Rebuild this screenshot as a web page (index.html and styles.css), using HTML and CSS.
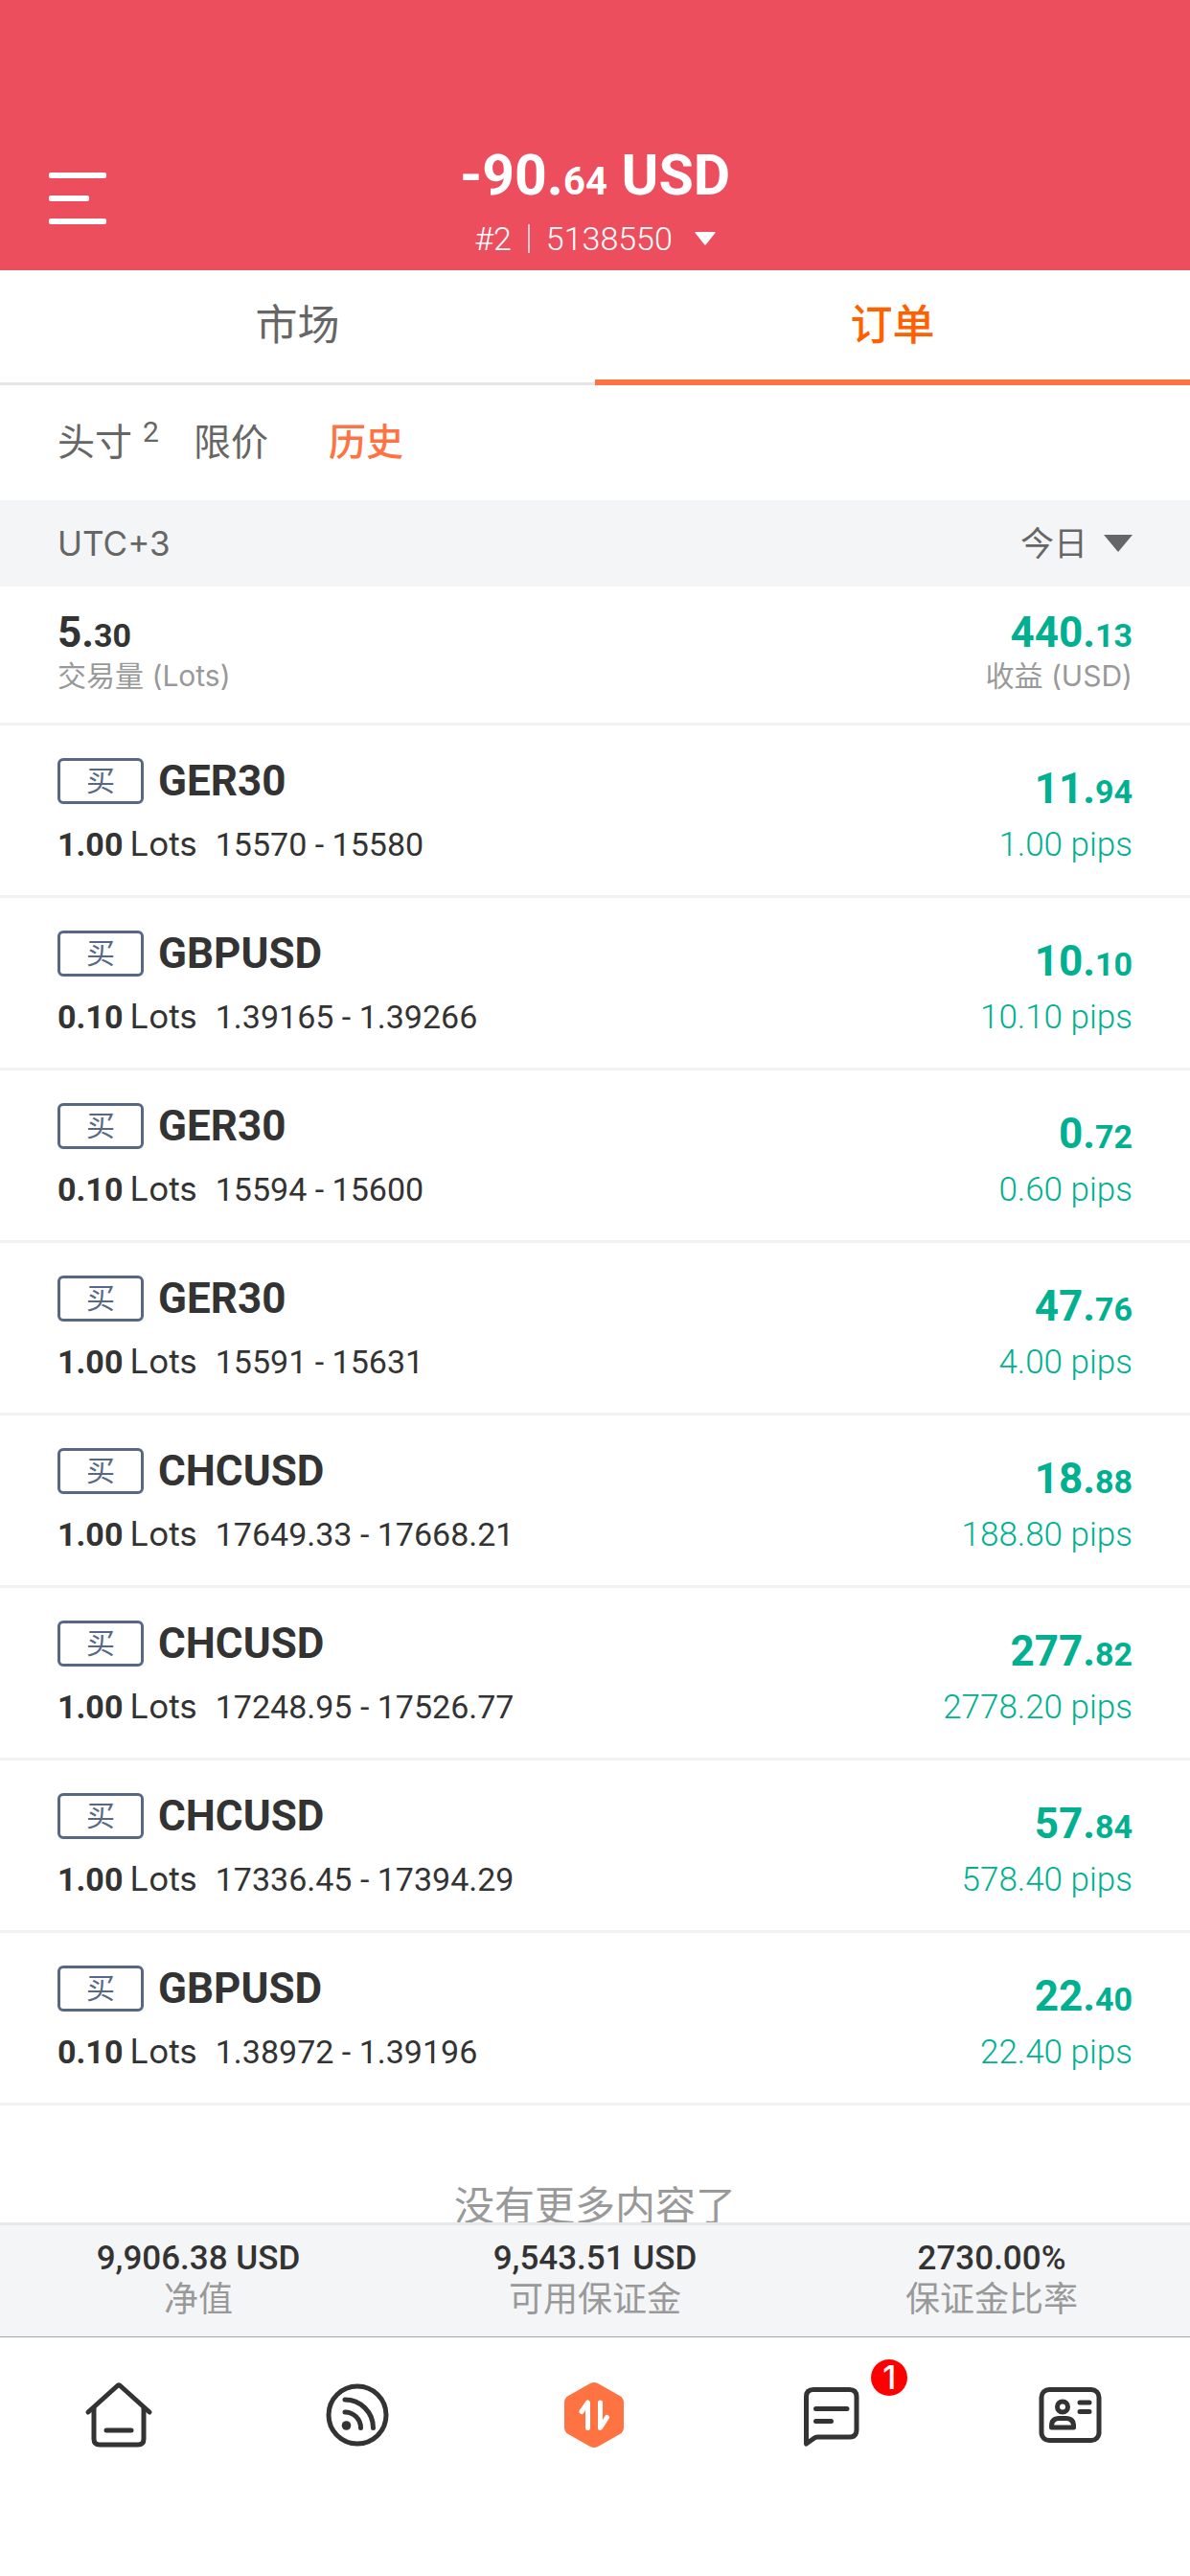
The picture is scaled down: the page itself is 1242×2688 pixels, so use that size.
FILE: index.html
```
<!DOCTYPE html>
<html lang="zh-CN">
<head>
    <meta charset="UTF-8">
    <meta name="viewport" content="width=device-width, initial-scale=1.0">
    <title>订单</title>
    <link rel="stylesheet" href="styles.css">
</head>
<body>
    <header class="header">
        <button type="button" class="menu-btn" aria-label="菜单">
            <span class="bar"></span>
            <span class="bar short"></span>
            <span class="bar"></span>
        </button>
        <div class="account">
            <h1 class="balance">-90.<small>64</small> USD</h1>
            <button type="button" class="account-btn">
                <span>#2</span>
                <span class="divider"></span>
                <span>5138550</span>
                <svg class="account-arrow" viewBox="0 0 22 14"><path d="M1 0h20q1 0 .5 1L12 13q-1 1-2 0L.5 1Q0 0 1 0z" fill="#fff"/></svg>
            </button>
        </div>
    </header>

    <nav class="tabs">
        <a href="#market" class="tab">市场</a>
        <a href="#orders" class="tab active">订单</a>
    </nav>

    <nav class="filters">
        <a href="#positions">头寸<sup>2</sup></a>
        <a href="#limit">限价</a>
        <a href="#history" class="active">历史</a>
    </nav>

    <div class="date-bar">
        <label for="period">UTC+3</label>
        <div class="period">
            <select id="period">
                <option>今日</option>
            </select>
            <svg class="period-arrow" viewBox="0 0 30 18"><path d="M0 0h30L15 18z" fill="#666"/></svg>
        </div>
    </div>

    <main class="content">
        <!-- Totals for the period -->
        <section class="summary">
            <div>
                <div class="amount">5.<small>30</small></div>
                <div class="caption">交易量 (Lots)</div>
            </div>
            <div class="right">
                <div class="amount green">440.<small>13</small></div>
                <div class="caption">收益 (USD)</div>
            </div>
        </section>

        <!-- Closed orders -->
        <ul class="orders">
            <li class="order">
                <div>
                    <div class="symbol"><span class="side">买</span>GER30</div>
                    <div class="detail"><b>1.00</b><span class="unit">Lots</span>15570 - 15580</div>
                </div>
                <div class="right">
                    <div class="amount green">11.<small>94</small></div>
                    <div class="pips">1.00 pips</div>
                </div>
            </li>
            <li class="order">
                <div>
                    <div class="symbol"><span class="side">买</span>GBPUSD</div>
                    <div class="detail"><b>0.10</b><span class="unit">Lots</span>1.39165 - 1.39266</div>
                </div>
                <div class="right">
                    <div class="amount green">10.<small>10</small></div>
                    <div class="pips">10.10 pips</div>
                </div>
            </li>
            <li class="order">
                <div>
                    <div class="symbol"><span class="side">买</span>GER30</div>
                    <div class="detail"><b>0.10</b><span class="unit">Lots</span>15594 - 15600</div>
                </div>
                <div class="right">
                    <div class="amount green">0.<small>72</small></div>
                    <div class="pips">0.60 pips</div>
                </div>
            </li>
            <li class="order">
                <div>
                    <div class="symbol"><span class="side">买</span>GER30</div>
                    <div class="detail"><b>1.00</b><span class="unit">Lots</span>15591 - 15631</div>
                </div>
                <div class="right">
                    <div class="amount green">47.<small>76</small></div>
                    <div class="pips">4.00 pips</div>
                </div>
            </li>
            <li class="order">
                <div>
                    <div class="symbol"><span class="side">买</span>CHCUSD</div>
                    <div class="detail"><b>1.00</b><span class="unit">Lots</span>17649.33 - 17668.21</div>
                </div>
                <div class="right">
                    <div class="amount green">18.<small>88</small></div>
                    <div class="pips">188.80 pips</div>
                </div>
            </li>
            <li class="order">
                <div>
                    <div class="symbol"><span class="side">买</span>CHCUSD</div>
                    <div class="detail"><b>1.00</b><span class="unit">Lots</span>17248.95 - 17526.77</div>
                </div>
                <div class="right">
                    <div class="amount green">277.<small>82</small></div>
                    <div class="pips">2778.20 pips</div>
                </div>
            </li>
            <li class="order">
                <div>
                    <div class="symbol"><span class="side">买</span>CHCUSD</div>
                    <div class="detail"><b>1.00</b><span class="unit">Lots</span>17336.45 - 17394.29</div>
                </div>
                <div class="right">
                    <div class="amount green">57.<small>84</small></div>
                    <div class="pips">578.40 pips</div>
                </div>
            </li>
            <li class="order">
                <div>
                    <div class="symbol"><span class="side">买</span>GBPUSD</div>
                    <div class="detail"><b>0.10</b><span class="unit">Lots</span>1.38972 - 1.39196</div>
                </div>
                <div class="right">
                    <div class="amount green">22.<small>40</small></div>
                    <div class="pips">22.40 pips</div>
                </div>
            </li>
        </ul>
        <p class="no-more">没有更多内容了</p>
    </main>

    <section class="totals">
        <div class="total"><strong>9,906.38 USD</strong><span>净值</span></div>
        <div class="total"><strong>9,543.51 USD</strong><span>可用保证金</span></div>
        <div class="total"><strong>2730.00%</strong><span>保证金比率</span></div>
    </section>

    <nav class="bottom-nav">
        <a href="#home" aria-label="首页">
            <svg class="icon" viewBox="0 0 72 72">
                <path d="M4 33L34 6q2-2 4 0l30 27"/>
                <path d="M10 29v32q0 6 6 6h40q6 0 6-6V29"/>
                <path d="M23 52h26"/>
            </svg>
        </a>
        <a href="#feed" aria-label="动态">
            <svg class="icon" viewBox="0 0 72 72">
                <circle cx="36" cy="36" r="30"/>
                <circle cx="24.5" cy="47" r="4.8" class="solid"/>
                <path d="M23 20a29.5 29.5 0 0 1 29.5 29.5M23 33a16.5 16.5 0 0 1 16.5 16.5"/>
            </svg>
        </a>
        <a href="#trade" aria-label="交易">
            <svg class="icon trade" viewBox="0 0 72 72">
                <path class="hexagon" d="M35 10l23 13v26L35 62 12 49V23z"/>
                <path d="M22 32.5l6.5-9.5v26.5M41.5 23v26.5l7-11"/>
            </svg>
        </a>
        <a href="#messages" aria-label="消息">
            <svg class="icon" viewBox="0 0 72 72">
                <path d="M8.5 66V17q0-7.5 7.5-7.5h37.5q7.500 0 7.5 7.5v34.5q0 7.5-7.5 7.5H20q-2 0-3 1z"/>
                <path d="M18.5 29.5H51M18.5 42.5h16"/>
            </svg>
            <span class="badge">1</span>
        </a>
        <a href="#profile" aria-label="我的">
            <svg class="icon" viewBox="0 0 72 72">
                <rect x="5" y="9.5" width="60" height="53" rx="8"/>
                <circle cx="27" cy="27.5" r="5.5"/>
                <path d="M15.5 49v-1.5q0-8 8-8h7q8 0 8 8V49z"/>
                <path d="M45 23h10M45 32.5h10"/>
            </svg>
        </a>
    </nav>
</body>
</html>
```
FILE: styles.css
```
* {
    box-sizing: border-box;
}
body {
    font-family: Roboto, "Noto Sans CJK SC", sans-serif;
    background: #fff;
    color: #333;
    margin: 0;
    height: 100vh;
    display: flex;
    flex-direction: column;
    overflow: hidden;
}
a {
    color: inherit;
    text-decoration: none;
}
button {
    background: none;
    border: none;
    padding: 0;
    font-family: inherit;
    color: inherit;
    cursor: pointer;
}
.header {
    display: grid;
    grid-template-columns: 60px 1fr 60px;
    padding: 148px 51px 0;
    height: 282px;
    flex-shrink: 0;
    background-color: #ec4e5e;
    color: #fff;
}
.menu-btn {
    display: flex;
    flex-direction: column;
    gap: 18px;
    margin-top: 32px;
    align-self: start;
}
.bar {
    width: 60px;
    height: 6px;
    border-radius: 2px;
    background: #fff;
}
.bar.short {
    width: 42px;
}
.account {
    display: flex;
    flex-direction: column;
    align-items: center;
}
.balance {
    margin: 0;
    font-size: 59px;
    line-height: 70px;
}
.balance small {
    font-size: 40px;
}
.account-btn {
    display: flex;
    align-items: center;
    gap: 17px;
    margin-top: 4px;
    font-size: 34px;
    font-weight: 300;
    line-height: 40px;
}
.divider {
    width: 2px;
    height: 30px;
    background: rgba(255, 255, 255, 0.7);
}
.account-arrow {
    width: 22px;
    height: 14px;
    margin-left: 6px;
}
.tabs {
    display: flex;
    flex-shrink: 0;
    height: 120px;
}
.tab {
    flex: 1;
    padding-top: 25px;
    border-bottom: 3px solid #e5e5e5;
    text-align: center;
    font-size: 44px;
    line-height: 66px;
    color: #666;
}
.tab.active {
    border-bottom: 6px solid #ff7241;
    color: #ff6100;
    font-weight: 500;
}
.filters {
    display: flex;
    align-items: center;
    flex-shrink: 0;
    height: 120px;
    padding: 0 60px;
    font-size: 39px;
    line-height: 60px;
    color: #666;
}
.filters a {
    margin-right: 63px;
}
.filters a:first-child {
    margin-right: 36px;
}
.filters sup {
    margin-left: 11px;
    font-size: 30px;
    line-height: 0;
}
.filters .active {
    color: #ff7241;
    font-weight: 500;
}
.date-bar {
    display: flex;
    align-items: center;
    justify-content: space-between;
    flex-shrink: 0;
    height: 90px;
    padding: 0 60px;
    background: #f4f5f7;
    font-family: Inter, "Noto Sans CJK SC", sans-serif;
    font-size: 35px;
    color: #666;
}
.period {
    display: flex;
    align-items: center;
    gap: 16px;
}
.period select {
    appearance: none;
    border: none;
    padding: 0;
    background: none;
    font-family: inherit;
    font-size: 35px;
    color: inherit;
}
.period-arrow {
    width: 30px;
    height: 18px;
}
.content {
    flex: 1;
    min-height: 0;
    overflow: hidden;
}
.summary,
.order {
    display: flex;
    justify-content: space-between;
    border-bottom: 3px solid #f2f2f2;
    padding: 0 60px;
}
.summary {
    height: 145px;
    padding-top: 22px;
}
.right {
    text-align: right;
}
.amount {
    font-size: 44px;
    font-weight: bold;
    line-height: 52px;
}
.amount small {
    font-size: 34px;
}
.green {
    color: #00b090;
}
.caption {
    font-family: Inter, "Noto Sans CJK SC", sans-serif;
    font-size: 30px;
    line-height: 32px;
    color: #999;
}
.orders {
    list-style: none;
    margin: 0;
    padding: 0;
}
.order {
    height: 180px;
    padding-top: 34px;
}
.symbol {
    display: flex;
    align-items: center;
    gap: 15px;
    height: 48px;
    font-size: 44px;
    font-weight: bold;
    line-height: 52px;
}
.side {
    display: flex;
    align-items: center;
    justify-content: center;
    width: 90px;
    height: 48px;
    border: 3px solid #566884;
    border-radius: 6px;
    font-size: 30px;
    font-weight: normal;
    line-height: 40px;
    color: #566884;
}
.detail {
    margin-top: 21px;
    font-size: 34px;
    line-height: 40px;
}
.unit {
    margin: 0 19px 0 7px;
    font-family: Inter, sans-serif;
    font-size: 35px;
}
.order .right {
    padding-top: 6px;
}
.pips {
    margin-top: 10px;
    font-size: 35px;
    font-weight: 300;
    line-height: 40px;
    color: #00b090;
}
.no-more {
    margin: 73px 0 0;
    text-align: center;
    font-size: 42px;
    line-height: 66px;
    color: #999;
}
.totals {
    display: flex;
    flex-shrink: 0;
    height: 120px;
    padding-top: 15px;
    border-top: 3px solid #e6e8ea;
    border-bottom: 1px solid #a5a5a5;
    background: #f4f5f7;
}
.total {
    flex: 1;
    display: flex;
    flex-direction: column;
    align-items: center;
}
.total strong {
    font-size: 35px;
    font-weight: 500;
    line-height: 40px;
}
.total span {
    font-size: 36px;
    line-height: 46px;
    color: #999;
}
.bottom-nav {
    display: flex;
    flex-shrink: 0;
    height: 249px;
    padding-top: 45px;
}
.bottom-nav a {
    flex: 1;
    display: flex;
    justify-content: center;
    align-items: flex-start;
    position: relative;
}
.icon {
    width: 72px;
    height: 72px;
    fill: none;
    stroke: #333;
    stroke-width: 5;
    stroke-linecap: round;
    stroke-linejoin: round;
}
.icon .solid {
    fill: #333;
    stroke: none;
}
.icon.trade {
    stroke: #fff;
}
.icon .hexagon {
    fill: #ff7241;
    stroke: #ff7241;
    stroke-width: 16;
}
/* unread messages counter */
.badge {
    position: absolute;
    top: -22px;
    left: calc(50% + 40px);
    width: 38px;
    height: 38px;
    border-radius: 50%;
    background: #f00;
    color: #fff;
    text-align: center;
    font-family: Inter, sans-serif;
    font-size: 34px;
    font-weight: 500;
    line-height: 38px;
}
```
